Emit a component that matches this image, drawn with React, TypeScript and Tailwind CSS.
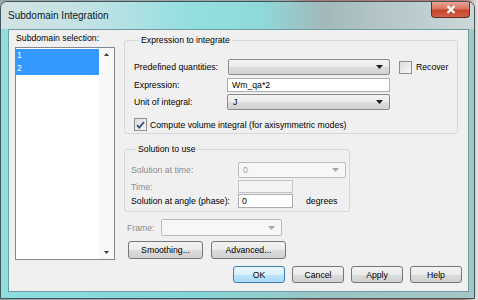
import React from "react";

const arrowDark = (
  <svg width="7" height="4" viewBox="0 0 7 4"><path d="M0 0h7L3.5 4z" fill="#1e1e1e" /></svg>
);
const arrowLight = (
  <svg width="7" height="4" viewBox="0 0 7 4"><path d="M0 0h7L3.5 4z" fill="#a8a8a8" /></svg>
);

function Check({ checked }: { checked?: boolean }) {
  return (
    <span className="w-[13px] h-[13px] shrink-0 border border-[#8e8f8f] bg-[linear-gradient(135deg,#dcdcdc,#f7f7f7)] flex items-center justify-center">
      {checked && (
        <svg width="9" height="8" viewBox="0 0 9 8">
          <path d="M1 4.2l2.3 2.4L8 1" fill="none" stroke="#34508a" strokeWidth="1.8" />
        </svg>
      )}
    </span>
  );
}

function Combo({ w, value, disabled }: { w: string; value?: string; disabled?: boolean }) {
  return disabled ? (
    <div className={`${w} h-full flex items-center justify-between border border-[#b9bcbf] rounded-[2px] bg-[#f7f7f7] pl-[4px] pr-[6px] text-[#9a9a9a]`}>
      <span>{value}</span>
      {arrowLight}
    </div>
  ) : (
    <div className={`${w} h-full flex items-center justify-between border border-[#8a8a8a] rounded-[2px] bg-[linear-gradient(#f3f3f3,#ebebeb_50%,#dcdcdc_50%,#d2d2d2)] pl-[5px] pr-[6px] text-black`}>
      <span>{value}</span>
      {arrowDark}
    </div>
  );
}

function Btn({ label, def, w = "w-[52px]" }: { label: string; def?: boolean; w?: string }) {
  return (
    <div
      className={`${w} h-full flex items-center justify-center rounded-[3px] border ${
        def
          ? "border-[#3c7fb1] bg-[linear-gradient(#eaf6fd,#d9f0fc_50%,#bee6fd_50%,#a7d9f5)]"
          : "border-[#777] bg-[linear-gradient(#f2f2f2,#ebebeb_50%,#dddddd_50%,#cfcfcf)]"
      }`}
    >
      {label}
    </div>
  );
}

export default function App() {
  return (
    <div className="w-[478px] h-[300px] overflow-hidden bg-[linear-gradient(to_right,#98a4a6_0%,#98a4a6_60%,#b07a74_64%,#b07a74_97%,#e6e6e6_100%)] font-['Liberation_Sans',Arial,sans-serif] text-[8.7px] leading-[12px] text-black">
      <div className="mt-[1px] w-[475px] h-[298px] rounded-t-[7px] border border-[#42555a] bg-[linear-gradient(to_right,#8edede,#84d7d7_40%,#9cc4c4_70%,#a7c6c6)] flex flex-col">
        {/* title bar */}
        <div className="h-[27px] shrink-0 rounded-t-[6px] flex items-start justify-between bg-[linear-gradient(to_right,#d3e2e4_0%,#bfe2e4_20%,#93dfe0_40%,#8fd9da_55%,#a2b9ba_68%,#b3c5c7_80%,#cbd8da_100%)]">
          <span className="mt-[8px] ml-[7px] text-[10px] leading-[12px] text-[#0c1a1c]">Subdomain Integration</span>
          <div className="mr-[4px] w-[39px] h-[16px] rounded-b-[4px] border border-t-0 border-[#6a2b22] bg-[linear-gradient(#e9a596,#d9775f_45%,#c7442b_55%,#d0604a)] flex items-center justify-center">
            <svg width="10" height="9" viewBox="0 0 10 9">
              <path d="M1.5 1l7 7M8.5 1l-7 7" stroke="#fff" strokeWidth="2.2" />
            </svg>
          </div>
        </div>

        {/* client area */}
        <div className="flex-1 ml-[7px] mr-[5px] mb-[6px] border border-[#6d9ca1] bg-[#f0f0f0] flex">
          {/* left column */}
          <div className="w-[115px] shrink-0 pt-[2px]">
            <div className="ml-[7px]">Subdomain selection:</div>
            <div className="mt-[3px] ml-[6px] w-[100px] h-[213px] border border-[#828790] bg-white flex">
              <div className="flex-1">
                <div className="h-[13px] mt-[1px] bg-[#3399ff] text-white pl-[1px] leading-[13px]">1</div>
                <div className="h-[13px] bg-[#3399ff] text-white pl-[1px] leading-[13px]">2</div>
              </div>
              <div className="w-[15px] flex flex-col justify-between items-center py-[5px] bg-[#f8f8f8]">
                <svg width="5" height="3" viewBox="0 0 5 3"><path d="M0 3h5L2.5 0z" fill="#3c3c3c" /></svg>
                <svg width="5" height="3" viewBox="0 0 5 3"><path d="M0 0h5L2.5 3z" fill="#3c3c3c" /></svg>
              </div>
            </div>
          </div>

          {/* right column */}
          <div className="flex-1 pt-[4px]">
            <fieldset className="w-[334px] border border-[#d3d8db] rounded-[3px] pt-[13px] pb-[2px] pl-[9px] m-0">
              <legend className="ml-[5px] px-[2px]">Expression to integrate</legend>
              <div className="h-[16px] flex items-center">
                <span className="w-[94px]">Predefined quantities:</span>
                <Combo w="w-[162px]" />
                <span className="ml-[9px]"><Check /></span>
                <span className="ml-[4px]">Recover</span>
              </div>
              <div className="mt-[3px] h-[14px] flex items-center">
                <span className="w-[93px]">Expression:</span>
                <div className="w-[163px] h-full border border-[#abadb3] bg-white pl-[4px] flex items-center">Wm_qa*2</div>
              </div>
              <div className="mt-[2px] h-[16px] flex items-center">
                <span className="w-[93px]">Unit of integral:</span>
                <Combo w="w-[163px]" value="J" />
              </div>
              <div className="mt-[8px] h-[13px] flex items-center">
                <Check checked />
                <span className="ml-[3px]">Compute volume integral (for axisymmetric modes)</span>
              </div>
            </fieldset>

            <fieldset className="mt-[9px] w-[226px] border border-[#d3d8db] rounded-[3px] pt-[7px] pb-[3px] pl-[6px] m-0">
              <legend className="ml-[5px] px-[2px]">Solution to use</legend>
              <div className="h-[16px] flex items-center">
                <span className="w-[107px] text-[#8c8c8c]">Solution at time:</span>
                <Combo w="w-[108px]" value="0" disabled />
              </div>
              <div className="mt-[2px] h-[13px] flex items-center">
                <span className="w-[107px] text-[#8c8c8c]">Time:</span>
                <div className="w-[55px] h-full border border-[#c2c4c8] bg-[#f4f4f4]" />
              </div>
              <div className="mt-[1px] h-[14px] flex items-center">
                <span className="w-[107px]">Solution at angle (phase):</span>
                <div className="w-[55px] h-full border border-[#abadb3] bg-white pl-[3px] flex items-center">0</div>
                <span className="ml-[13px]">degrees</span>
              </div>
            </fieldset>

            <div className="mt-[7px] h-[17px] flex items-center pl-[3px]">
              <span className="w-[34px] text-[#8c8c8c]">Frame:</span>
              <Combo w="w-[121px]" disabled />
            </div>

            <div className="mt-[5px] h-[18px] flex pl-[4px] gap-[8px]">
              <Btn label="Smoothing..." w="w-[75px]" />
              <Btn label="Advanced..." w="w-[75px]" />
            </div>

            <div className="mt-[7px] h-[17px] flex ml-[109px] gap-[7px]">
              <Btn label="OK" def />
              <Btn label="Cancel" />
              <Btn label="Apply" />
              <Btn label="Help" />
            </div>
          </div>
        </div>
      </div>
    </div>
  );
}
